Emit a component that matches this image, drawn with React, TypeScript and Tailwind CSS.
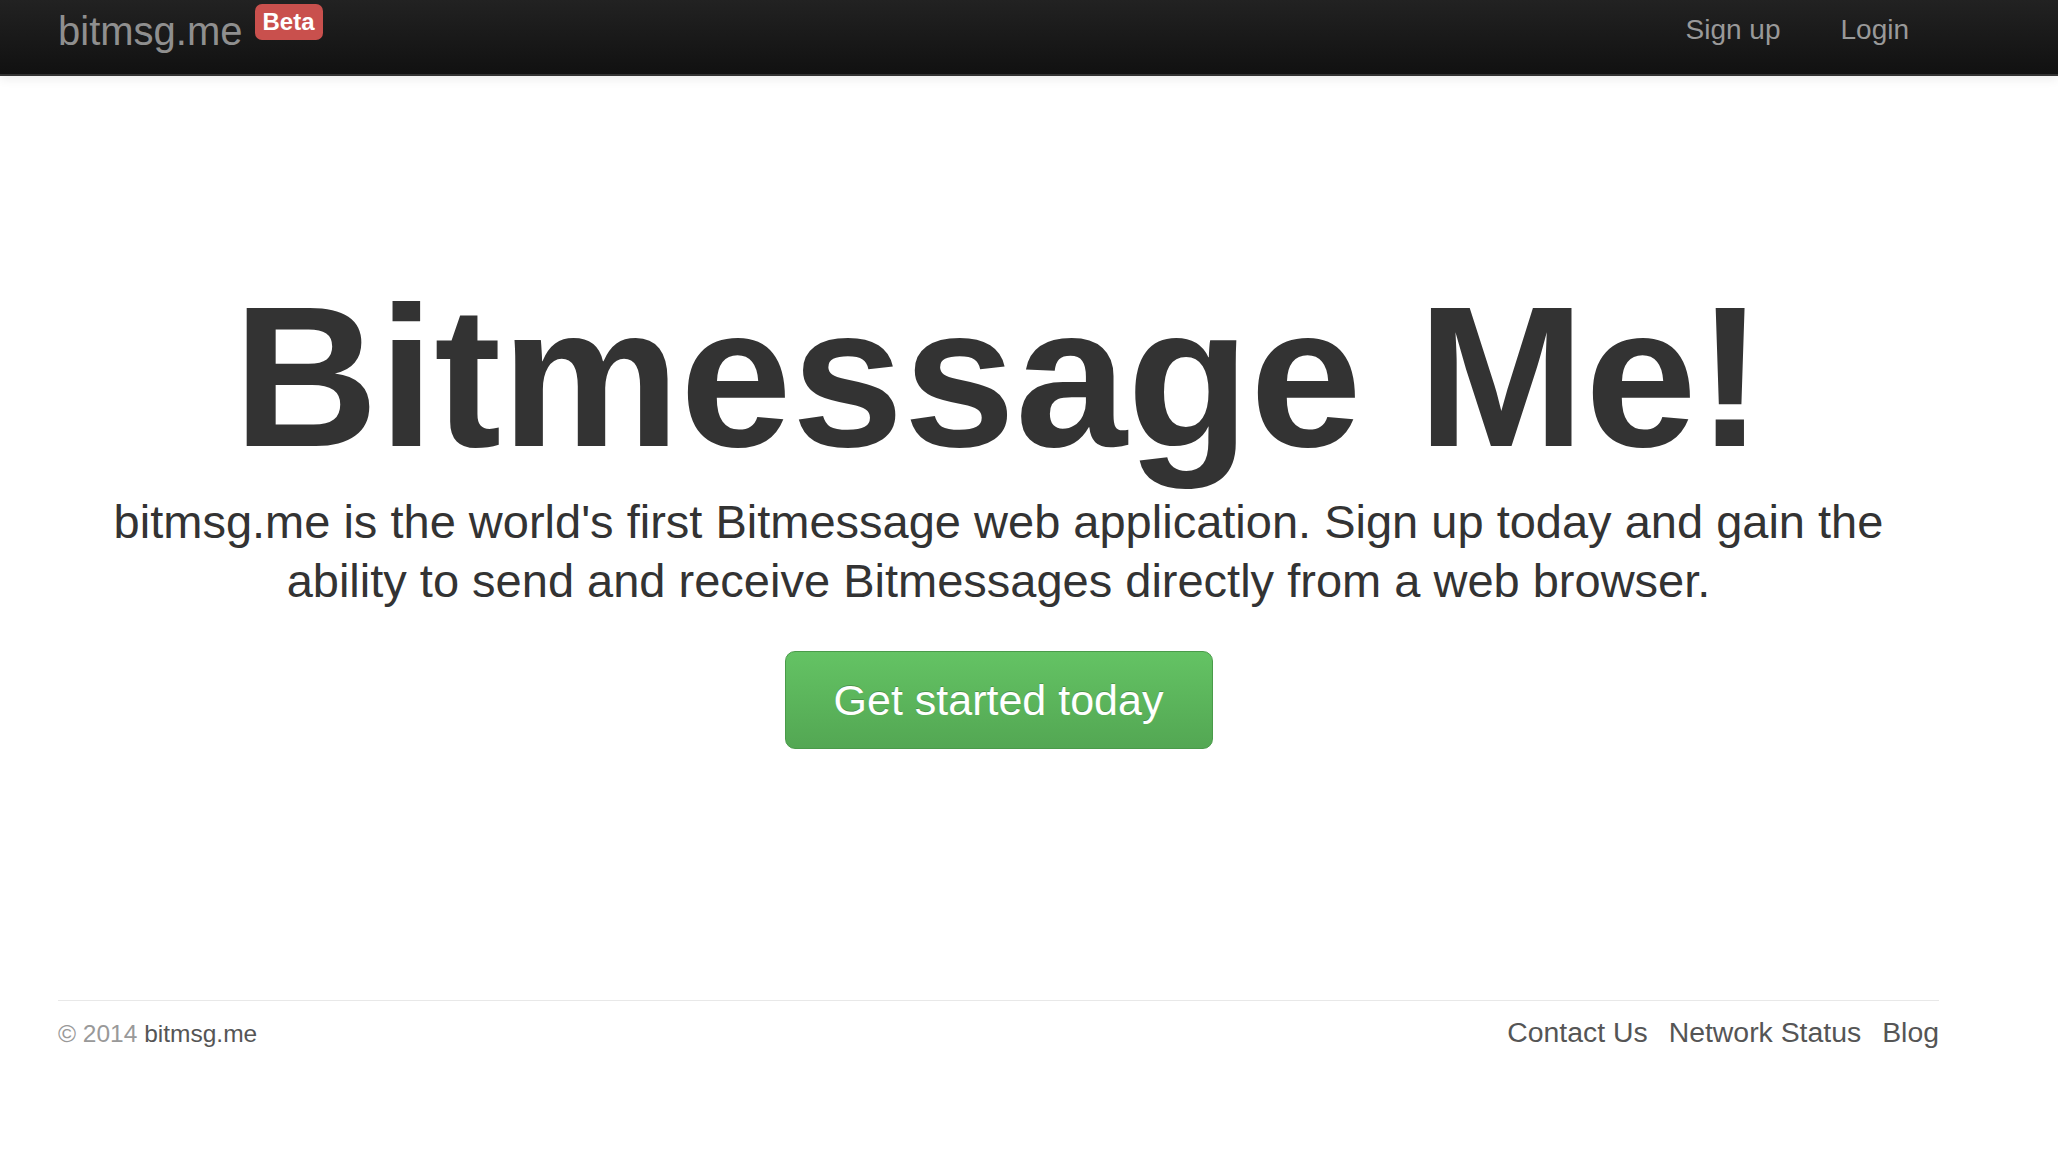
export default function App() {
  return (
    <div className="min-h-[1150px] bg-white font-['Liberation_Sans',Arial,sans-serif] text-[#333]">
      <nav className="h-[76px] border-b-2 border-[#333] bg-gradient-to-b from-[#222] to-[#111] shadow-[0_3px_10px_rgba(0,0,0,0.08)]">
        <div className="flex items-start pl-[58px] pr-[119px]">
          <a href="#" className="pt-[11px] text-[40px] leading-[40px] text-[#8f8f8f]">
            bitmsg.me
          </a>
          <span className="ml-[12px] mt-[4px] h-[36px] rounded-[7px] bg-[#c9504d] px-[8px] text-[24px] font-bold leading-[36px] text-white">
            Beta
          </span>
          <div className="ml-auto flex">
            <a href="#" className="px-[30px] pt-[10px] text-[28px] leading-[40px] text-[#999]">
              Sign up
            </a>
            <a href="#" className="px-[30px] pt-[10px] text-[28px] leading-[40px] text-[#999]">
              Login
            </a>
          </div>
        </div>
      </nav>

      <div className="pl-[58px] pr-[119px]">
        <main className="pt-[191px] text-center">
          <h1 className="text-[201px] font-bold leading-[220px] text-[#333]">
            Bitmessage Me!
          </h1>
          <p className="mt-[5px] text-[47px] leading-[59px] text-[#333]">
            bitmsg.me is the world's first Bitmessage web application. Sign up today and gain the ability
            to send and receive Bitmessages directly from a web browser.
          </p>
          <button
            type="button"
            className="mt-[41px] h-[98px] w-[428px] rounded-[10px] border border-[#4a9b4a] bg-gradient-to-b from-[#64c364] to-[#53a753] text-[43px] text-white [text-shadow:0_-1px_0_rgba(0,0,0,0.2)]"
          >
            Get started today
          </button>
        </main>

        <footer className="mt-[251px] border-t border-[#e8e8e8] pt-[14px]">
          <div className="flex items-baseline justify-between">
            <p className="text-[24.5px] leading-[34px] text-[#999]">
              © 2014 <span className="text-[#555]">bitmsg.me</span>
            </p>
            <div className="flex gap-[21px] text-[28.4px] leading-[34px] text-[#555]">
              <a href="#">Contact Us</a>
              <a href="#">Network Status</a>
              <a href="#">Blog</a>
            </div>
          </div>
        </footer>
      </div>
    </div>
  );
}
